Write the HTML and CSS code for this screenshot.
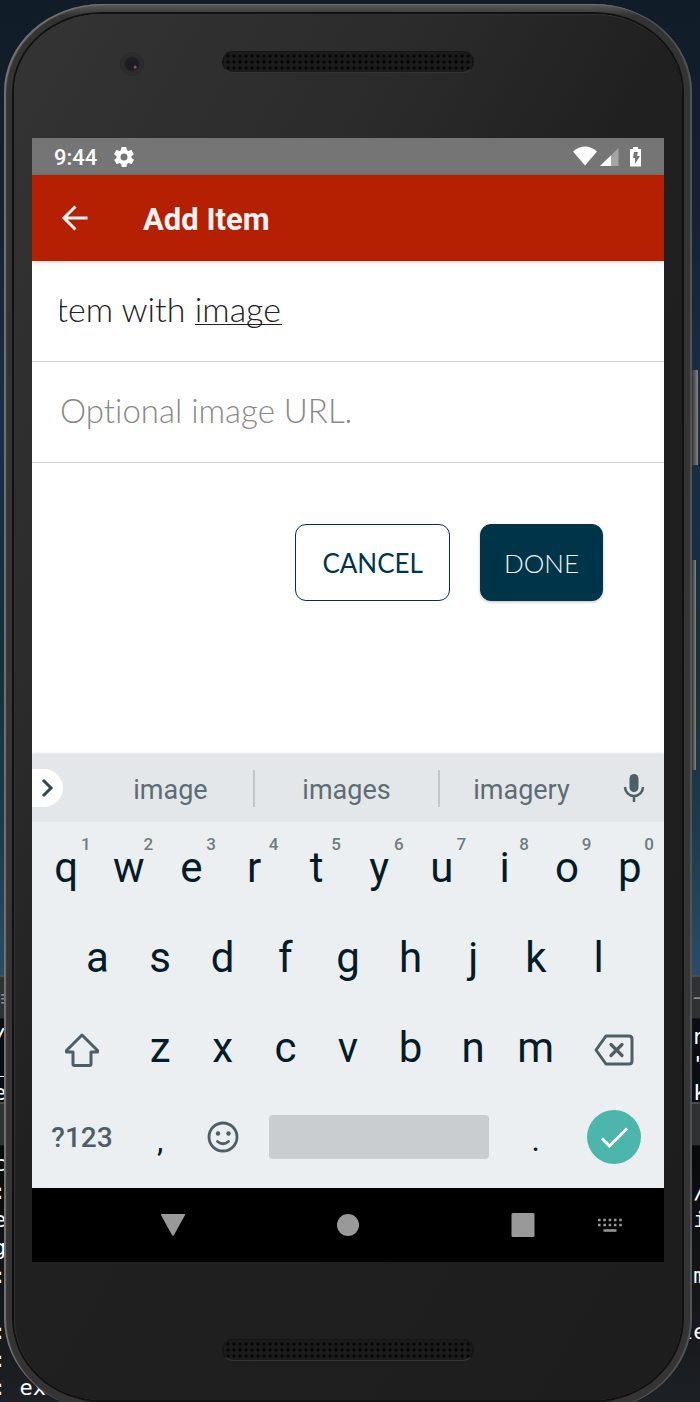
FILE: index.html
```html
<!DOCTYPE html>
<html lang="en">
<head>
<meta charset="utf-8">
<meta name="viewport" content="width=device-width, initial-scale=1">
<title>Add Item</title>
<link rel="stylesheet" href="styles.css">
</head>
<body>
<div class="desktop">
  <div class="backdrop" aria-hidden="true">
    <div class="wallpaper"></div>
    <div class="titlebar titlebar-menu"><span>≡</span><span>–</span></div>
    <div class="terminal terminal-short">
      <div class="line"><span>/</span><span> n</span></div>
      <div class="line"><span>_</span><span> "</span></div>
      <div class="line"><span>e</span><span> k</span></div>
    </div>
    <div class="titlebar"></div>
    <div class="terminal terminal-long">
      <div class="line"><span>c</span><span></span></div>
      <div class="line"><span>:</span><span> /</span></div>
      <div class="line"><span>e</span><span> i</span></div>
      <div class="line"><span>g</span><span></span></div>
      <div class="line"><span>:</span><span> m</span></div>
      <div class="line"></div>
      <div class="line"><span>:</span><span>le</span></div>
      <div class="line"><span>:</span><span></span></div>
      <div class="line"><span>: ex</span><span></span></div>
    </div>
  </div>

  <div class="phone">
    <span class="side-button power"></span>
    <span class="side-button volume"></span>
    <div class="face">
      <div class="bezel bezel-top">
        <span class="camera"></span>
        <span class="speaker"></span>
      </div>

      <main class="screen">
        <div class="status">
          <span class="time">9:44</span>
          <svg class="gear" width="24" height="24" viewBox="0 0 24 24" fill="#fff"><path d="M19.4 13c0-.3.1-.6.1-1s0-.7-.1-1l2.1-1.600c.2-.2.2-.4.1-.6l-2-3.500c-.1-.2-.4-.3-.6-.2l-2.500 1c-.5-.4-1.100-.7-1.700-1l-.4-2.600c0-.2-.2-.4-.5-.4h-4c-.3 0-.5.2-.5.4l-.4 2.600c-.6.3-1.200.6-1.700 1l-2.500-1c-.2-.1-.5 0-.6.2l-2 3.500c-.1.2-.1.5.1.6L4.600 11c0 .3-.1.7-.1 1s0 .7.1 1l-2.100 1.600c-.2.2-.2.4-.1.6l2 3.500c.1.2.4.3.6.2l2.500-1c.5.4 1.100.7 1.700 1l.4 2.600c0 .3.2.4.5.4h4c.3 0 .5-.2.5-.4l.4-2.600c.6-.3 1.200-.6 1.700-1l2.500 1c.2.1.5 0 .6-.2l2-3.500c.1-.2.1-.5-.1-.6L19.400 13zM12 15.500a3.500 3.500 0 1 1 0-7 3.500 3.500 0 0 1 0 7z"/></svg>
          <svg class="signals" width="72" height="24" viewBox="0 0 72 24">
            <path fill="#fff" d="M0 6.500Q12-3.500 24 6.500L12 20.500z"/>
            <path fill="#a5a5a5" d="M45.500 3v18H27z"/><path fill="#fff" d="M38 10.500V21H27z"/>
            <path fill="#fff" d="M60 2h5v2h3v17.500H57V4h3z"/><path fill="#757575" d="M61 7h4l-1 4h3l-5 8v-6h-2z"/>
          </svg>
        </div>

        <header class="appbar">
          <button class="back" type="button" aria-label="Back">
            <svg width="28" height="28" viewBox="0 0 28 28" fill="none" stroke="#f3f3f3" stroke-width="3"><path d="M26.500 14H3M14.500 2.500L3 14l11.500 11.500"/></svg>
          </button>
          <h1>Add Item</h1>
        </header>

        <form class="form">
          <div class="field">
            <input class="name" type="text" aria-label="Item name" value="Item with image">
            <span class="composing"></span>
          </div>
          <div class="field">
            <input type="text" aria-label="Image URL" placeholder="Optional image URL.">
          </div>
          <div class="actions">
            <button class="btn" type="button">CANCEL</button>
            <button class="btn btn-primary" type="button">DONE</button>
          </div>
        </form>

        <section class="keyboard" aria-label="Keyboard">
          <div class="suggestions">
            <button class="expand" type="button" aria-label="More"><svg width="16" height="20" viewBox="0 0 16 20" fill="none" stroke="#33474f" stroke-width="3"><path d="M3 2l8 8-8 8"/></svg></button>
            <button class="word" type="button">image</button>
            <button class="word" type="button">images</button>
            <button class="word" type="button">imagery</button>
            <button class="mic" type="button" aria-label="Voice input"><svg width="22" height="30" viewBox="0 0 22 30"><rect x="6.500" y="1" width="9" height="18" rx="4.500" fill="#4c5f68"/><path d="M2 14a9 9 0 0 0 18 0M11 23v6" fill="none" stroke="#4c5f68" stroke-width="2.500"/></svg></button>
          </div>
          <div class="keys">
            <div class="row row-ten">
              <button type="button">q<sup>1</sup></button><button type="button">w<sup>2</sup></button><button type="button">e<sup>3</sup></button><button type="button">r<sup>4</sup></button><button type="button">t<sup>5</sup></button><button type="button">y<sup>6</sup></button><button type="button">u<sup>7</sup></button><button type="button">i<sup>8</sup></button><button type="button">o<sup>9</sup></button><button type="button">p<sup>0</sup></button>
            </div>
            <div class="row row-nine">
              <button type="button">a</button><button type="button">s</button><button type="button">d</button><button type="button">f</button><button type="button">g</button><button type="button">h</button><button type="button">j</button><button type="button">k</button><button type="button">l</button>
            </div>
            <div class="row row-shift">
              <button class="icon-key" type="button" aria-label="Shift"><svg width="36" height="36" viewBox="0 0 36 36" fill="none" stroke="#4c5f68" stroke-width="3" stroke-linejoin="round"><path d="M18 3L2.500 18.500V20H9v12q0 1.500 1.500 1.500h15q1.500 0 1.500-1.500V20h6.500v-1.500z"/></svg></button>
              <button type="button">z</button><button type="button">x</button><button type="button">c</button><button type="button">v</button><button type="button">b</button><button type="button">n</button><button type="button">m</button>
              <button class="icon-key" type="button" aria-label="Delete"><svg width="40" height="32" viewBox="0 0 40 32" fill="none" stroke="#4c5f68" stroke-width="3" stroke-linejoin="round"><path d="M12 2h23q3 0 3 3v22q0 3-3 3H12L2 16z"/><path stroke-linecap="round" stroke-width="3.200" d="M17 10.500l11 11M28 10.500l-11 11"/></svg></button>
            </div>
            <div class="row row-space">
              <button class="symbols" type="button">?123</button>
              <button class="punct" type="button">,</button>
              <button type="button" aria-label="Emoji"><svg width="32" height="32" viewBox="0 0 32 32" fill="none" stroke="#4c5f68" stroke-width="2.800"><circle cx="16" cy="16" r="14"/><path stroke-linecap="round" d="M10.500 20.500q5.500 4.500 11 0"/><g fill="#4c5f68" stroke="none"><circle cx="11" cy="12.500" r="2.200"/><circle cx="21.500" cy="12.500" r="2.200"/></g></svg></button>
              <button class="space" type="button" aria-label="Space"></button>
              <button class="punct" type="button">.</button>
              <button type="button" aria-label="Enter"><svg width="54" height="54" viewBox="0 0 54 54"><circle cx="27" cy="27" r="27" fill="#4db6ac"/><path d="M15 28.500l7.500 7.500L40 18.500" fill="none" stroke="#fff" stroke-width="3"/></svg></button>
            </div>
          </div>
        </section>

        <nav class="navbar">
          <button type="button" aria-label="Back"><svg width="26" height="24" viewBox="0 0 26 24" fill="#999"><path d="M1.500 1h23q1 0 .5 1L14 22q-1 1.500-2 0L1 2q-.5-1 .5-1z"/></svg></button>
          <button type="button" aria-label="Home"><svg width="22" height="22" viewBox="0 0 22 22" fill="#999"><circle cx="11" cy="11" r="11"/></svg></button>
          <button type="button" aria-label="Overview"><svg width="24" height="24" viewBox="0 0 24 24" fill="#999"><rect x=".5" width="23" height="24" rx="1.500"/></svg></button>
          <button class="ime" type="button" aria-label="Switch keyboard"><svg width="26" height="16" viewBox="0 0 26 16" stroke="#999" stroke-width="2.600" fill="none"><path stroke-dasharray="2.600 2.700" d="M1 3h24M1 8h24"/><path stroke-width="2.500" d="M6.500 13.500h13"/></svg></button>
        </nav>
      </main>

      <div class="bezel bezel-bottom"><span class="speaker"></span></div>
    </div>
  </div>
</div>
</body>
</html>
```

FILE: styles.css
```css
* { box-sizing: border-box; }
body { margin: 0; background: #15181c; font-family: Roboto, "Noto Sans", sans-serif; }
button { border: 0; padding: 0; margin: 0; background: none; font: inherit; color: inherit; }
svg { display: block; }

.desktop { position: relative; overflow: hidden; height: 100vh; min-height: 1402px; padding: 4px 8px 0 4px; }

/* Desktop windows behind the phone */
.backdrop { position: absolute; inset: 0; }
.wallpaper { height: 975px; background: linear-gradient(#101c28, #14212f 20%, #1b2e47 42%, #172d44 52%, #16303a 68%, #1e3a4c 85%, #2b4c66); }
.titlebar { height: 44px; background: #303132; border-top: 2px solid #4b4c4d; border-bottom: 1px solid #161616; }
.titlebar-menu { display: flex; justify-content: space-between; font-size: 22px; line-height: 44px; color: #888; }
.titlebar-menu span { width: 8px; }
.terminal { background: #0a0e12; color: #fff; font: 22px/28px "DejaVu Sans Mono", monospace; }
.terminal-short { height: 83px; padding-top: 4px; }
.terminal-long { height: 260px; padding-top: 4px; background: linear-gradient(#08090b, #1d2024); }
.line { display: flex; justify-content: space-between; height: 28px; margin-left: -7px; }
.line span { white-space: pre; }
.line span:last-child { width: 20px; }

/* Handset */
.phone {
  position: relative; padding: 10px; border-radius: 98px 98px 98px 98px / 88px 88px 92px 92px;
  background: linear-gradient(#5a5a5b, #333 12px, #373535 50%, #353333);
  box-shadow: inset 2px 1px 1px #737373, inset -2px 0 1px #555;
}
.face {
  border-radius: 88px 88px 88px 88px / 78px 78px 82px 82px;
  background: linear-gradient(120deg, #343435 0, #303031 12%, #2b2b2c 28%, #202021 46%, #1d1d1e);
  box-shadow: 0 0 0 2px #111, inset 1px 1px 1px #343434;
  padding: 0 18px;
}
.side-button { position: absolute; left: 100%; width: 6px; background: linear-gradient(90deg, #333, #858585); }
.power { top: 366px; height: 95px; }
.volume { top: 556px; height: 210px; width: 4px; }
.bezel { display: grid; grid-template-columns: 1fr 252px 1fr; }
.bezel-top { height: 124px; padding-top: 37px; }
.bezel-bottom { height: 138px; padding-top: 77px; }
.speaker {
  grid-column: 2; height: 22px; border-radius: 11px; border: 1px solid #151515; border-bottom-color: #343434;
  background: radial-gradient(circle, #050505 0 1px, #1b1b1b 2px) 2px 1px / 6px 6px;
}
.camera {
  justify-self: end; width: 26px; height: 26px; margin: 0 77px 0 0; border-radius: 50%;
  background: radial-gradient(circle at 62% 62%, #8b4e51 0 1px, transparent 2px), radial-gradient(circle, #1e1b24 0 6px, #2c2c2d 8px 12px, #353535 13px);
}

/* Screen */
.screen { background: #fff; overflow: hidden; }
.status { display: flex; align-items: center; height: 37px; padding: 0 19px 0 22px; background: #757575; color: #fff; }
.time { padding-top: 2px; font-size: 22px; font-weight: 500; }
.gear { margin-left: 15px; }
.signals { margin-left: auto; }
.appbar { position: relative; display: flex; align-items: center; height: 86px; padding-left: 29px; background: #b52003; color: #f3f3f3; box-shadow: 0 1px 5px #0003; }
.appbar h1 { margin: 0 0 0 54px; padding-top: 3px; font-size: 31px; line-height: 40px; font-weight: 700; }

.form { height: 493px; }
.field { position: relative; height: 101px; padding: 0 28px; border-bottom: 1px solid #d3d3dc; }
.field input {
  width: 100%; height: 100px; border: 0; padding: 0 0 5px; outline: 0; background: none;
  font: 300 33px/40px Lato, sans-serif; font-variant-ligatures: none; color: #222;
}
.field input::placeholder { color: #888; opacity: 1; }
.field .name { font-size: 34px; text-indent: -12px; }
.composing { position: absolute; left: 163px; top: 63px; width: 87px; height: 1px; background: #222; }
.actions { display: flex; justify-content: flex-end; gap: 30px; padding: 61px 61px 0 0; }
.btn { height: 77px; padding: 0 26px; border: 1px solid #003549; border-radius: 11px; color: #003549; font: 400 26px/32px Lato, sans-serif; }
.btn-primary { padding: 0 23px; background: #003549; color: #f3f3f3; font-weight: 300; box-shadow: 0 1px 3px #0004; }

.keyboard { position: relative; background: #eceff1; color: #041c27; box-shadow: 0 0 3px #0003; }
.suggestions { display: grid; grid-template-columns: 36px 185px 185px 1fr 61px; align-items: center; height: 68px; background: #e4e7e9; }
.expand { width: 31px; height: 38px; border-radius: 0 19px 19px 0; background: #fff; padding-left: 8px; }
.word { height: 37px; padding-top: 3px; font-size: 27px; color: #5d6d74; }
.word:nth-of-type(2) { padding-left: 20px; }
.word + .word { border-left: 2px solid #c2c7ca; }
.mic { display: grid; place-items: center; }
.keys { padding: 0 3px 6px; }
.row { display: grid; height: 90px; font-size: 42px; }
.row button { position: relative; display: grid; place-items: center; }
.row-ten { grid-template-columns: repeat(10, 1fr); }
.row-nine { grid-template-columns: repeat(9, 1fr); padding: 0 31px; }
.row-shift { grid-template-columns: 3fr repeat(7, 2fr) 3fr; }
.row-space { grid-template-columns: 3fr 2fr 2fr 8fr 2fr 3fr; }
.row sup { position: absolute; right: 7px; top: 12px; font-size: 17px; line-height: 20px; font-weight: 500; color: #6e7c82; }
.row .icon-key { padding-top: 6px; }
.row .symbols { font-size: 28px; font-weight: 500; color: #4c5f68; }
.row .punct { padding-top: 6px; font-size: 32px; }
.row .space { align-self: center; height: 44px; margin: 0 15px; border-radius: 4px; background: #c9cdcf; }

.navbar { position: relative; display: grid; grid-template-columns: 54px repeat(3, 1fr) 54px; align-items: center; justify-items: center; height: 74px; background: #000; }
.navbar button:first-child { grid-column: 2; }
.ime { position: absolute; right: 41px; top: 29px; }
```
